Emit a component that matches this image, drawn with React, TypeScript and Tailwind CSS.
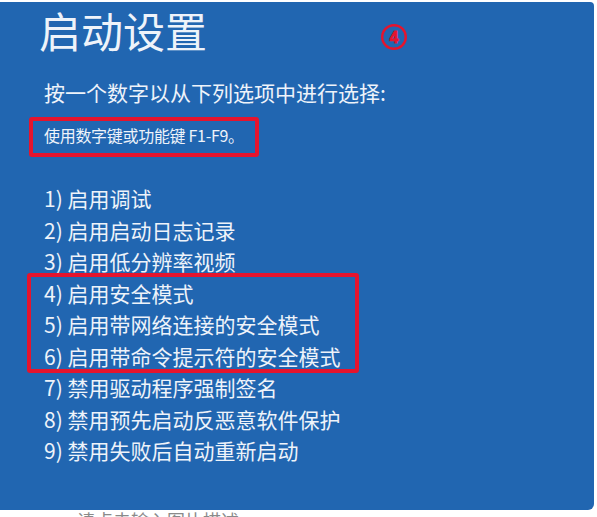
const items = [
  '1) 启用调试',
  '2) 启用启动日志记录',
  '3) 启用低分辨率视频',
  '4) 启用安全模式',
  '5) 启用带网络连接的安全模式',
  '6) 启用带命令提示符的安全模式',
  '7) 禁用驱动程序强制签名',
  '8) 禁用预先启动反恶意软件保护',
  '9) 禁用失败后自动重新启动',
]

function Item({ text }: { text: string }) {
  return <div className="text-[21px] leading-[31.5px] whitespace-nowrap">{text}</div>
}

function StepMarker() {
  return (
    <svg width="28" height="28" viewBox="0 0 28 28" className="absolute left-[380px] top-[21px]">
      <circle cx="14" cy="14" r="11.8" fill="none" stroke="#e5142d" strokeWidth="2.4" />
      <text
        x="14"
        y="19.6"
        textAnchor="middle"
        fontSize="16"
        fontWeight="700"
        fill="#e5142d"
        stroke="#e5142d"
        strokeWidth="0.9"
        fontFamily="Liberation Sans, Arial, sans-serif"
      >
        4
      </text>
    </svg>
  )
}

export default function App() {
  return (
    <div
      className="w-[597px] h-[517px] overflow-hidden bg-white pt-[2px]"
      style={{ fontFamily: '"Noto Sans CJK SC", "Noto Sans", sans-serif' }}
    >
      {/* Boot settings screen */}
      <div className="relative w-[594px] h-[508px] bg-[#2166b1] rounded-tr-[4px] rounded-br-[6px] pt-[4px] pl-[44px] text-[#eef3fa]">
        <h1 className="-ml-[5px] text-[42px] leading-[48px] font-normal">启动设置</h1>

        <StepMarker />

        <p className="mt-[23px] text-[21px] leading-[30px]">按一个数字以从下列选项中进行选择:</p>

        <div className="mt-[10px] -ml-[15px] w-[230px] h-[40px] border-[4px] border-[#e5142d] rounded-[3px] pl-[11px] pt-[2px]">
          <span className="text-[16px] leading-[24px] tracking-[-0.3px] whitespace-nowrap">使用数字键或功能键 F1-F9。</span>
        </div>

        <div className="mt-[26px]">
          {items.slice(0, 3).map((t) => (
            <Item key={t} text={t} />
          ))}
          <div className="relative">
            <div className="absolute -left-[17px] -top-[5px] -bottom-[1px] w-[332px] border-[4px] border-[#e5142d] rounded-[3px]" />
            {items.slice(3, 6).map((t) => (
              <Item key={t} text={t} />
            ))}
          </div>
          {items.slice(6).map((t) => (
            <Item key={t} text={t} />
          ))}
        </div>
      </div>

      <div className="pl-[77px] text-[18px] leading-[20px] text-[#8a8a8a] whitespace-nowrap">请点击输入图片描述</div>
    </div>
  )
}
